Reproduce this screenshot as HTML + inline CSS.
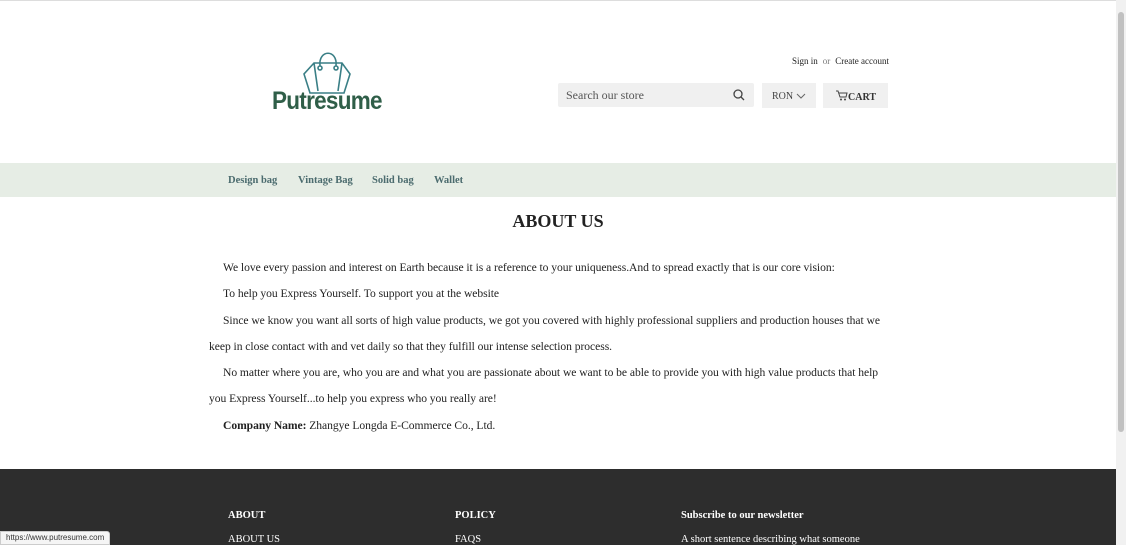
<!DOCTYPE html>
<html><head><meta charset="utf-8"><style>
*{margin:0;padding:0;box-sizing:border-box}
body{width:1126px;height:545px;overflow:hidden;background:#fff;font-family:"Liberation Serif",serif;color:#222;position:relative}
.sb{position:absolute;right:0;top:0;width:10px;height:545px;background:#f1f1f1}
.sb i{position:absolute;left:2px;top:12px;width:6px;height:420px;background:#c1c1c1;border-radius:3px}
.topline{position:absolute;left:0;top:0;width:1116px;height:1px;background:#ddd}
.logo{position:absolute;left:272px;top:50px}
.logo .t{position:absolute;left:0;top:37px;font-family:"Liberation Sans",sans-serif;font-weight:bold;font-size:25px;color:#2f5e48;letter-spacing:-0.8px;white-space:nowrap;transform:scaleX(0.9);transform-origin:left}
.acct{position:absolute;left:792px;top:56px;font-size:9px;color:#222}
.acct span{color:#777;margin:0 5px}
.search{position:absolute;left:558px;top:83px;width:196px;height:24px;background:#f0f0f0;border-radius:2px;font-size:12px;color:#555;padding:5px 8px}
.ron{position:absolute;left:762px;top:83px;width:54px;height:25px;background:#f0f0f0;font-size:10px;color:#444;padding:8px 10px}
.cart{position:absolute;left:823px;top:83px;width:65px;height:25px;background:#f0f0f0;font-size:10px;color:#333;font-weight:bold;padding:7px 0 0 13px}
.nav{position:absolute;left:0;top:163px;width:1116px;height:34px;background:#e6ede5}
.nav a{position:absolute;top:12px;font-size:10.5px;font-weight:bold;color:#4b6b6e;text-decoration:none}
h1{position:absolute;left:0;width:1116px;text-align:center;top:211px;font-size:18px;font-weight:bold;color:#222}
.c{position:absolute;left:209px;top:255px;width:685px;font-size:11.6px;letter-spacing:-0.05px;line-height:26.3px;color:#222}
.c p{text-indent:14px}
.foot{position:absolute;left:0;top:469px;width:1116px;height:76px;background:#2d2d2d;color:#fff;font-size:10.5px}
.foot div{position:absolute}
.url{position:absolute;left:0;top:531px;height:14px;padding:1px 5px;background:#f5f5f5;border:1px solid #ccc;font-family:"Liberation Sans",sans-serif;font-size:8px;color:#333;border-radius:0 3px 0 0}
</style></head><body>
<div class="topline"></div>
<div class="logo">
<svg width="115" height="50" style="position:absolute;left:0;top:0" viewBox="0 0 115 50">
<g fill="none" stroke="#3a7f86" stroke-width="1.6">
<path d="M48 16 C46 -1 66 -1 64 16"/>
<path d="M42 13 L70 13 L78 24 L72 43 L38 43 L32 24 Z"/>
<path d="M42 13 L46 41 M70 13 L66 41"/>
<circle cx="48" cy="18" r="2"/><circle cx="64" cy="18" r="2"/>
</g></svg>
<div class="t">Putresume</div>
</div>
<div class="acct">Sign in<span>or</span>Create account</div>
<div class="search">Search our store
<svg width="12" height="12" viewBox="0 0 12 12" style="position:absolute;right:9px;top:6px"><circle cx="5" cy="5" r="4" fill="none" stroke="#444" stroke-width="1.3"/><path d="M8 8 L11 11" stroke="#444" stroke-width="1.3"/></svg></div>
<div class="ron">RON <svg width="10" height="6" viewBox="0 0 10 6"><path d="M1 1 L5 5 L9 1" fill="none" stroke="#666"/></svg></div>
<div class="cart"><svg width="12" height="11" viewBox="0 0 12 11" style="vertical-align:-1px"><path d="M0 1 H2 L4 7 H10 L11 3 H3" fill="none" stroke="#444"/><circle cx="5" cy="9.5" r="1" fill="#444"/><circle cx="9" cy="9.5" r="1" fill="#444"/></svg>CART</div>
<div class="nav"><a style="left:228px">Design bag</a><a style="left:298px">Vintage Bag</a><a style="left:372px">Solid bag</a><a style="left:434px">Wallet</a></div>
<h1>ABOUT US</h1>
<div class="c">
<p>We love every passion and interest on Earth because it is a reference to your uniqueness.And to spread exactly that is our core vision:</p>
<p>To help you Express Yourself. To support you at the website</p>
<p>Since we know you want all sorts of high value products, we got you covered with highly professional suppliers and production houses that we keep in close contact with and vet daily so that they fulfill our intense selection process.</p>
<p>No matter where you are, who you are and what you are passionate about we want to be able to provide you with high value products that help you Express Yourself...to help you express who you really are!</p>
<p><b>Company Name:</b> Zhangye Longda E-Commerce Co., Ltd.</p>
</div>
<div class="foot">
<div style="left:228px;top:41px;font-weight:bold">ABOUT</div>
<div style="left:455px;top:41px;font-weight:bold">POLICY</div>
<div style="left:681px;top:41px;font-weight:bold">Subscribe to our newsletter</div>
<div style="left:228px;top:65px">ABOUT US</div>
<div style="left:455px;top:65px">FAQS</div>
<div style="left:681px;top:65px">A short sentence describing what someone</div>
</div>
<div class="url">https://www.putresume.com</div>
<div class="sb"><i></i></div>
</body></html>
